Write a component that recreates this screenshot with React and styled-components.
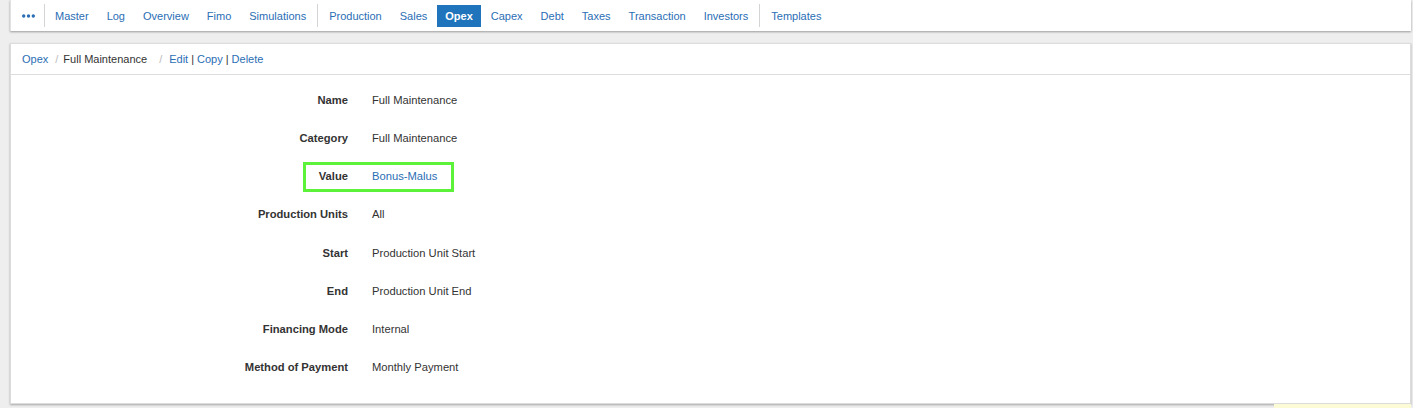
import React from "react";
import styled, { createGlobalStyle } from "styled-components";

const Global = createGlobalStyle`
  html, body { margin: 0; padding: 0; background: #eeeeee; }
  body { font-family: "Liberation Sans", Arial, Helvetica, sans-serif; font-size: 11px; color: #333; }
  * { box-sizing: border-box; }
`;

const Page = styled.div`
  padding: 0 2px 0 10px;
`;

const NavBar = styled.nav`
  height: 31px;
  background: #fff;
  display: flex;
  align-items: center;
  padding-left: 2px;
  box-shadow: 0 1px 2px rgba(0, 0, 0, 0.35);
  border-left: 1px solid #e2e2e2;
`;

const NavItem = styled.a`
  display: flex;
  align-items: center;
  height: 22px;
  padding: 0 8px;
  margin: 0 1px;
  color: ${(p) => (p.$active ? "#fff" : "#2a6eb5")};
  background: ${(p) => (p.$active ? "#1f74bb" : "transparent")};
  font-weight: ${(p) => (p.$active ? "bold" : "normal")};
  text-decoration: none;
  cursor: pointer;
  white-space: nowrap;
`;

const NavSep = styled.span`
  width: 1px;
  height: 23px;
  background: #d4d4d4;
  margin: 0 ${(p) => (p.$wide ? 2 : 1)}px 0 ${(p) => (p.$wide ? 2 : 0)}px;
`;

const Panel = styled.section`
  margin-top: 12px;
  background: #fff;
  border: 1px solid #dcdcdc;
  box-shadow: 0 1px 2px rgba(0, 0, 0, 0.3);
`;

const PanelHeader = styled.div`
  height: 31px;
  display: flex;
  align-items: center;
  padding-left: 11px;
  border-bottom: 1px solid #dddddd;
`;

const Crumb = styled.a`
  color: ${(p) => (p.$current ? "#333" : "#2a6eb5")};
  text-decoration: none;
  cursor: ${(p) => (p.$current ? "default" : "pointer")};
`;

const CrumbSep = styled.span`
  color: #bbb;
  padding: 0 ${(p) => p.$right || 5}px 0 ${(p) => p.$left || 7}px;
`;

const Pipe = styled.span`
  color: #333;
  padding: 0 3px;
`;

const Details = styled.div`
  padding: 15px 0 26px;
  display: flex;
  flex-direction: column;
  gap: 18.15px;
  font-size: 11.2px;
`;

const Row = styled.div`
  position: relative;
  display: grid;
  grid-template-columns: 337px 1fr;
  column-gap: 24px;
  height: 20px;
  align-items: center;
`;

const Label = styled.div`
  text-align: right;
  font-weight: bold;
  color: #333;
`;

const Value = styled.div`
  color: ${(p) => (p.$link ? "#2a6eb5" : "#333")};
`;

const Highlight = styled.span`
  position: absolute;
  left: 292px;
  top: -4px;
  width: 151px;
  height: 30px;
  border: 3px solid #5cf23a;
  pointer-events: none;
`;

const Strip = styled.div`
  margin-left: auto;
  width: 137px;
  height: 6px;
  background: #fbfbd6;
`;

const Dots = () => (
  <svg width="13" height="6" viewBox="0 0 13 6">
    <circle cx="1.7" cy="3" r="1.7" fill="#2a6eb5" />
    <circle cx="6.5" cy="3" r="1.7" fill="#2a6eb5" />
    <circle cx="11.3" cy="3" r="1.7" fill="#2a6eb5" />
  </svg>
);

const groups = [
  ["Master", "Log", "Overview", "Fimo", "Simulations"],
  ["Production", "Sales", "Opex", "Capex", "Debt", "Taxes", "Transaction", "Investors"],
  ["Templates"],
];

const rows = [
  ["Name", "Full Maintenance"],
  ["Category", "Full Maintenance"],
  ["Value", "Bonus-Malus", true],
  ["Production Units", "All"],
  ["Start", "Production Unit Start"],
  ["End", "Production Unit End"],
  ["Financing Mode", "Internal"],
  ["Method of Payment", "Monthly Payment"],
];

export default function App() {
  return (
    <>
      <Global />
      <Page>
        <NavBar>
          <NavItem>
            <Dots />
          </NavItem>
          {groups.map((g, gi) => (
            <React.Fragment key={gi}>
              <NavSep $wide={gi > 0} />
              {g.map((it) => (
                <NavItem key={it} $active={it === "Opex"}>
                  {it}
                </NavItem>
              ))}
            </React.Fragment>
          ))}
        </NavBar>
        <Panel>
          <PanelHeader>
            <Crumb>Opex</Crumb>
            <CrumbSep>/</CrumbSep>
            <Crumb $current>Full Maintenance</Crumb>
            <CrumbSep $left={12} $right={7}>/</CrumbSep>
            <Crumb>Edit</Crumb>
            <Pipe>|</Pipe>
            <Crumb>Copy</Crumb>
            <Pipe>|</Pipe>
            <Crumb>Delete</Crumb>
          </PanelHeader>
          <Details>
            {rows.map(([l, v, hl]) => (
              <Row key={l}>
                <Label>{l}</Label>
                <Value $link={hl}>{v}</Value>
                {hl && <Highlight />}
              </Row>
            ))}
          </Details>
        </Panel>
        <Strip />
      </Page>
    </>
  );
}
